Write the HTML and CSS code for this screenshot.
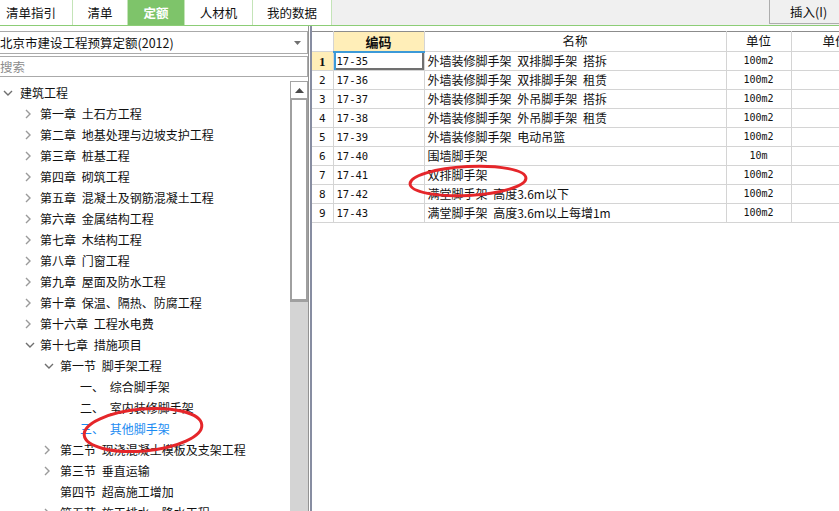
FILE: index.html
```html
<!DOCTYPE html>
<html lang="zh">
<head>
<meta charset="utf-8">
<title>定额</title>
<link rel="stylesheet" href="styles.css">
</head>
<body>
<div class="topbar">
  <div class="tab t1">清单指引</div>
  <div class="tab t2">清单</div>
  <div class="tab t3 active">定额</div>
  <div class="tab t4">人材机</div>
  <div class="tab t5">我的数据</div>
  <div class="insert-btn">插入(I)</div>
</div>
<div class="main">
  <div class="left">
    <div class="select">
      <span class="select-text">北京市建设工程预算定额(2012)</span>
      <svg class="caret" width="7" height="4" viewBox="0 0 7 4"><path d="M0 0H7L3.5 4Z" fill="#707070"/></svg>
    </div>
    <div class="search">搜索</div>
    <div class="tree-wrap">
      <div class="tree">
        <div class="row l1"><span class="chev"><svg width="10" height="6" viewBox="0 0 10 6"><path d="M1 1L5 5L9 1" fill="none" stroke="#6f6f6f" stroke-width="1.4"/></svg></span><span>建筑工程</span></div>
        <div class="row l2"><span class="chev"><svg width="6" height="10" viewBox="0 0 6 10"><path d="M1 1L5 5L1 9" fill="none" stroke="#9a9a9a" stroke-width="1.4"/></svg></span><span>第一章 土石方工程</span></div>
        <div class="row l2"><span class="chev"><svg width="6" height="10" viewBox="0 0 6 10"><path d="M1 1L5 5L1 9" fill="none" stroke="#9a9a9a" stroke-width="1.4"/></svg></span><span>第二章 地基处理与边坡支护工程</span></div>
        <div class="row l2"><span class="chev"><svg width="6" height="10" viewBox="0 0 6 10"><path d="M1 1L5 5L1 9" fill="none" stroke="#9a9a9a" stroke-width="1.4"/></svg></span><span>第三章 桩基工程</span></div>
        <div class="row l2"><span class="chev"><svg width="6" height="10" viewBox="0 0 6 10"><path d="M1 1L5 5L1 9" fill="none" stroke="#9a9a9a" stroke-width="1.4"/></svg></span><span>第四章 砌筑工程</span></div>
        <div class="row l2"><span class="chev"><svg width="6" height="10" viewBox="0 0 6 10"><path d="M1 1L5 5L1 9" fill="none" stroke="#9a9a9a" stroke-width="1.4"/></svg></span><span>第五章 混凝土及钢筋混凝土工程</span></div>
        <div class="row l2"><span class="chev"><svg width="6" height="10" viewBox="0 0 6 10"><path d="M1 1L5 5L1 9" fill="none" stroke="#9a9a9a" stroke-width="1.4"/></svg></span><span>第六章 金属结构工程</span></div>
        <div class="row l2"><span class="chev"><svg width="6" height="10" viewBox="0 0 6 10"><path d="M1 1L5 5L1 9" fill="none" stroke="#9a9a9a" stroke-width="1.4"/></svg></span><span>第七章 木结构工程</span></div>
        <div class="row l2"><span class="chev"><svg width="6" height="10" viewBox="0 0 6 10"><path d="M1 1L5 5L1 9" fill="none" stroke="#9a9a9a" stroke-width="1.4"/></svg></span><span>第八章 门窗工程</span></div>
        <div class="row l2"><span class="chev"><svg width="6" height="10" viewBox="0 0 6 10"><path d="M1 1L5 5L1 9" fill="none" stroke="#9a9a9a" stroke-width="1.4"/></svg></span><span>第九章 屋面及防水工程</span></div>
        <div class="row l2"><span class="chev"><svg width="6" height="10" viewBox="0 0 6 10"><path d="M1 1L5 5L1 9" fill="none" stroke="#9a9a9a" stroke-width="1.4"/></svg></span><span>第十章 保温、隔热、防腐工程</span></div>
        <div class="row l2"><span class="chev"><svg width="6" height="10" viewBox="0 0 6 10"><path d="M1 1L5 5L1 9" fill="none" stroke="#9a9a9a" stroke-width="1.4"/></svg></span><span>第十六章 工程水电费</span></div>
        <div class="row l2"><span class="chev"><svg width="10" height="6" viewBox="0 0 10 6"><path d="M1 1L5 5L9 1" fill="none" stroke="#6f6f6f" stroke-width="1.4"/></svg></span><span>第十七章 措施项目</span></div>
        <div class="row l3"><span class="chev"><svg width="10" height="6" viewBox="0 0 10 6"><path d="M1 1L5 5L9 1" fill="none" stroke="#6f6f6f" stroke-width="1.4"/></svg></span><span>第一节 脚手架工程</span></div>
        <div class="row l4"><span>一、 综合脚手架</span></div>
        <div class="row l4"><span>二、 室内装修脚手架</span></div>
        <div class="row l4 current"><span>三、 其他脚手架</span></div>
        <div class="row l3"><span class="chev"><svg width="6" height="10" viewBox="0 0 6 10"><path d="M1 1L5 5L1 9" fill="none" stroke="#9a9a9a" stroke-width="1.4"/></svg></span><span>第二节 现浇混凝土模板及支架工程</span></div>
        <div class="row l3"><span class="chev"><svg width="6" height="10" viewBox="0 0 6 10"><path d="M1 1L5 5L1 9" fill="none" stroke="#9a9a9a" stroke-width="1.4"/></svg></span><span>第三节 垂直运输</span></div>
        <div class="row l3"><span class="chev"></span><span>第四节 超高施工增加</span></div>
        <div class="row l3"><span class="chev"><svg width="6" height="10" viewBox="0 0 6 10"><path d="M1 1L5 5L1 9" fill="none" stroke="#9a9a9a" stroke-width="1.4"/></svg></span><span>第五节 施工排水、降水工程</span></div>
      </div>
      <div class="scrollbar">
        <div class="sb-up"><svg width="9" height="5" viewBox="0 0 9 5"><path d="M0 5H9L4.5 0Z" fill="#4a4a4a"/></svg></div>
        <div class="sb-thumb"></div>
        <div class="sb-track"></div>
      </div>
    </div>
  </div>
  <div class="divider"></div>
  <div class="right">
    <table class="grid">
      <colgroup>
        <col class="c-num"><col class="c-code"><col class="c-name"><col class="c-unit"><col class="c-price">
      </colgroup>
      <thead>
        <tr><th class="num"></th><th class="code-h">编码</th><th>名称</th><th>单位</th><th>单价</th></tr>
      </thead>
      <tbody>
        <tr><td class="num sel-num">1</td><td class="code focus">17-35</td><td>外墙装修脚手架 双排脚手架 搭拆</td><td class="unit">100m2</td><td></td></tr>
        <tr><td class="num">2</td><td class="code">17-36</td><td>外墙装修脚手架 双排脚手架 租赁</td><td class="unit">100m2</td><td></td></tr>
        <tr><td class="num">3</td><td class="code">17-37</td><td>外墙装修脚手架 外吊脚手架 搭拆</td><td class="unit">100m2</td><td></td></tr>
        <tr><td class="num">4</td><td class="code">17-38</td><td>外墙装修脚手架 外吊脚手架 租赁</td><td class="unit">100m2</td><td></td></tr>
        <tr><td class="num">5</td><td class="code">17-39</td><td>外墙装修脚手架 电动吊篮</td><td class="unit">100m2</td><td></td></tr>
        <tr><td class="num">6</td><td class="code">17-40</td><td>围墙脚手架</td><td class="unit">10m</td><td></td></tr>
        <tr><td class="num">7</td><td class="code">17-41</td><td>双排脚手架</td><td class="unit">100m2</td><td></td></tr>
        <tr><td class="num">8</td><td class="code">17-42</td><td>满堂脚手架 高度3.6m以下</td><td class="unit">100m2</td><td></td></tr>
        <tr><td class="num">9</td><td class="code">17-43</td><td>满堂脚手架 高度3.6m以上每增1m</td><td class="unit">100m2</td><td></td></tr>
      </tbody>
    </table>
  </div>
</div>
<svg class="annot" width="839" height="511" viewBox="0 0 839 511">
  <ellipse cx="143" cy="430" rx="59" ry="21" transform="rotate(-5 143 430)" fill="none" stroke="#e5262a" stroke-width="3"/>
  <ellipse cx="468" cy="181" rx="58" ry="14.5" transform="rotate(-3 468 181)" fill="none" stroke="#e5262a" stroke-width="3"/>
</svg>
</body>
</html>
```
FILE: styles.css
```css
* { box-sizing: border-box; }
html, body { margin: 0; padding: 0; }
body {
  width: 839px;
  height: 511px;
  overflow: hidden;
  position: relative;
  background: #fff;
  font-family: "Noto Sans CJK SC", "Noto Sans", sans-serif;
  font-size: 12px;
  color: #111;
  word-spacing: 3px;
}

/* top tabs */
.topbar {
  display: flex;
  height: 26px;
  background: #f0f0f0;
  border-bottom: 1px solid #8ccd76;
}
.tab {
  height: 25px;
  line-height: 25px;
  text-align: center;
  background: #fff;
  border-right: 1px solid #c4e4b8;
  font-size: 12.5px;
  color: #111;
}
.t1 { width: 73px; padding-right: 10px; }
.t2 { width: 55px; }
.t3 { width: 57px; }
.t4 { width: 68px; }
.t5 { width: 79px; }
.tab.active {
  background: #7ec46a;
  color: #fff;
  font-weight: bold;
}
.insert-btn {
  margin-left: auto;
  width: 70px;
  height: 24px;
  border-left: 1px solid #adadad;
  border-bottom: 1px solid #adadad;
  background: #f0f0f0;
  line-height: 23px;
  padding-left: 20px;
  font-size: 12.5px;
  word-spacing: 0;
}

/* main area */
.main {
  display: flex;
  height: 485px;
}
.left {
  width: 308px;
  display: flex;
  flex-direction: column;
}
.select {
  margin-top: 5px;
  margin-left: -2px;
  height: 23px;
  border: 1px solid #aaaaaa;
  display: flex;
  align-items: center;
  justify-content: space-between;
  padding: 0 6px 0 1px;
  background: #fff;
  word-spacing: 0;
}
.select-text { font-size: 12.5px; }
.search {
  margin-top: 2px;
  margin-left: -2px;
  height: 21px;
  border: 1px solid #aaaaaa;
  line-height: 19px;
  padding-left: 1px;
  color: #8c8c8c;
  font-size: 12.5px;
}
.tree-wrap {
  flex: 1;
  display: flex;
  margin-top: 4px;
  min-height: 0;
}
.tree {
  flex: 1;
  padding-top: 1px;
  overflow: hidden;
}
.row {
  height: 21px;
  display: flex;
  align-items: center;
  white-space: nowrap;
  font-size: 12px;
  line-height: 1;
}
.chev {
  width: 20px;
  height: 21px;
  display: flex;
  align-items: center;
  padding-left: 3px;
  flex-shrink: 0;
}
.l1 { padding-left: 0; }
.l2 { padding-left: 20px; }
.l3 { padding-left: 40px; }
.l4 { padding-left: 80px; }
.l2 .chev { padding-left: 5px; }
.l3 .chev { padding-left: 4px; }
.current { color: #1b8cf2; }

.scrollbar {
  width: 18px;
  display: flex;
  flex-direction: column;
}
.sb-up {
  height: 18px;
  border: 1px solid #a3a3a3;
  background: #fff;
  display: flex;
  align-items: center;
  justify-content: center;
}
.sb-thumb {
  height: 203px;
  border: 2px solid #a0a0a0;
  border-top-width: 1px;
  border-bottom-width: 3px;
  background: #fff;
}
.sb-track {
  flex: 1;
  background: #d4d4d4;
}

.divider {
  width: 4px;
  border-left: 1px solid #939393;
  border-right: 2px solid #878da1;
  background: #fff;
}

/* right grid */
.right {
  flex: 1;
  overflow: hidden;
  padding-top: 5px;
}
.grid {
  border-collapse: collapse;
  table-layout: fixed;
  width: 567px;
  border-top: 1px solid #8c8c8c;
}
.c-num { width: 21px; }
.c-code { width: 91px; }
.c-name { width: 302px; }
.c-unit { width: 65px; }
.c-price { width: 88px; }
.grid th, .grid td {
  border: 1px solid #d4d4d4;
  height: 19px;
  padding: 0 3px;
  white-space: nowrap;
  overflow: hidden;
  line-height: 1;
  font-size: 12px;
  text-align: left;
  font-weight: normal;
}
.grid th {
  height: 20px;
  text-align: center;
  border-top: none;
  font-size: 12.5px;
}
.grid .num {
  border-left: none;
  text-align: center;
  padding: 0;
  font-family: "DejaVu Sans Mono", monospace;
  font-size: 11px;
}
.grid th.code-h {
  background: #ffeeb8;
  font-weight: bold;
  border-bottom: 2px solid #3c9ad8;
  font-size: 13px;
}
.grid .sel-num {
  background: #ffeeb8;
  font-weight: bold;
  font-family: "Liberation Serif", serif;
  font-size: 13px;
}
.grid .code {
  font-family: "DejaVu Sans Mono", monospace;
  font-size: 10.5px;
  word-spacing: 0;
}
.grid .unit {
  text-align: center;
  font-family: "DejaVu Sans Mono", monospace;
  font-size: 10px;
}
.grid .focus {
  box-shadow: inset 2px 0 0 #3c9ad8, inset -2px -2px 0 #707070;
}

.annot {
  position: absolute;
  left: 0;
  top: 0;
  pointer-events: none;
}
```
